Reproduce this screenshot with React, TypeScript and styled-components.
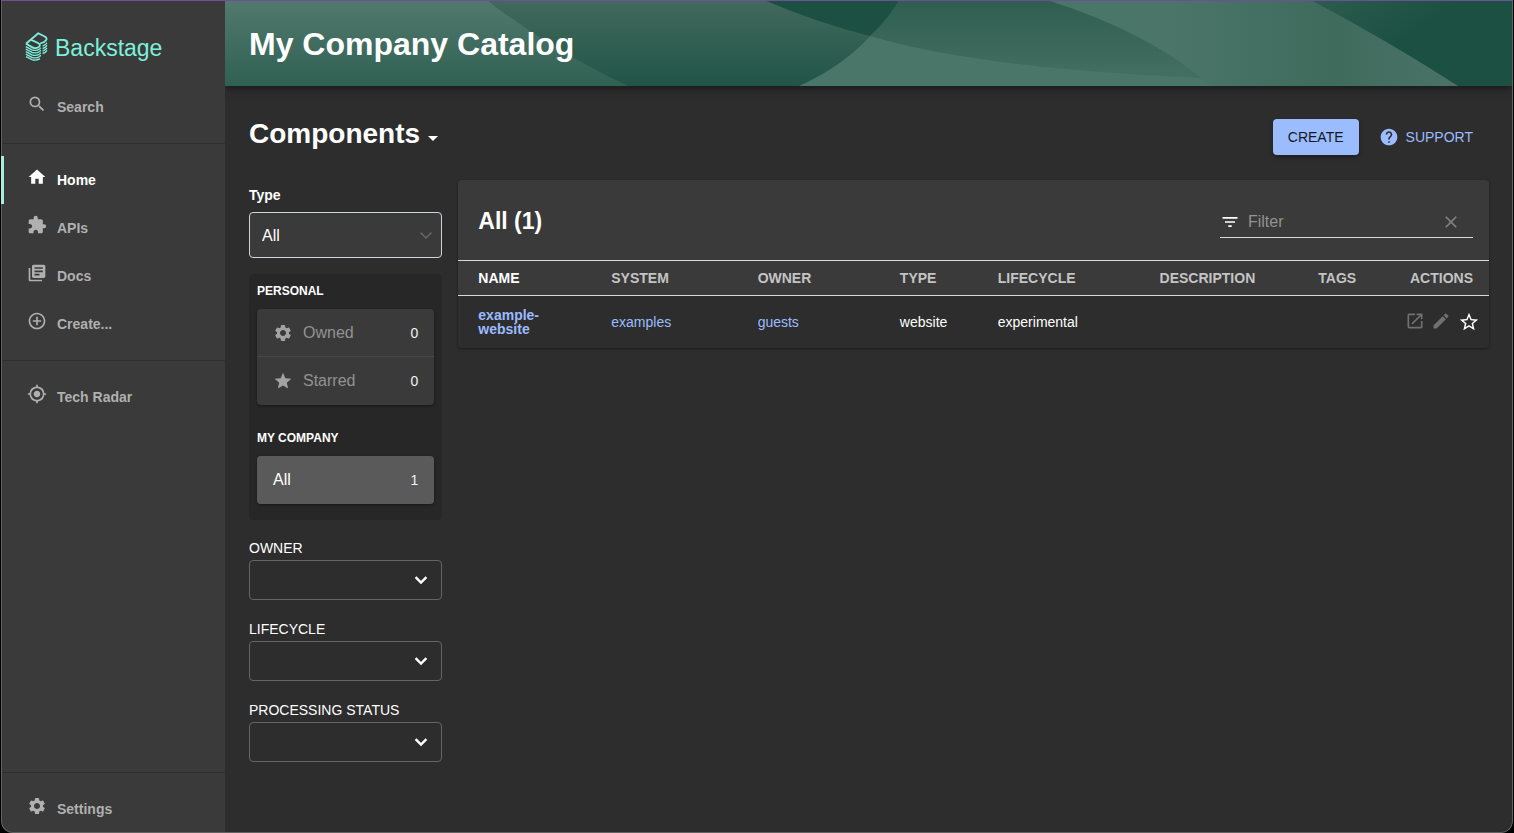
import React from 'react';
import styled, { createGlobalStyle, css } from 'styled-components';
import {
  MdAddCircleOutline,
  MdArrowDropDown,
  MdClear,
  MdEdit,
  MdExtension,
  MdFilterList,
  MdHelp,
  MdHome,
  MdLibraryBooks,
  MdMyLocation,
  MdOpenInNew,
  MdSearch,
  MdSettings,
  MdStar,
  MdStarBorder,
} from 'react-icons/md';

const color = {
  page: '#2d2d2d',
  surface: '#3a3a3a',
  sunken: '#272727',
  selected: '#5a5a5a',
  muted: '#b0b0b0',
  faint: '#929292',
  text: '#ffffff',
  link: '#9bbcff',
  brand: '#7df0da',
  line: '#d8d8d8',
};

const GlobalStyle = createGlobalStyle`
  *, *::before, *::after { box-sizing: border-box; }
  body {
    margin: 0;
    background: #000;
    color: ${color.text};
    font-family: 'Liberation Sans', Arial, sans-serif;
    font-size: 14px;
  }
  button, input, select { font: inherit; color: inherit; }
  h1, h2, h3, ul { margin: 0; padding: 0; }
  ul { list-style: none; }
  svg { display: block; flex: none; }
`;

const Shell = styled.div`
  position: relative;
  display: flex;
  min-height: 100vh;
  margin: 0 1px;
  background: ${color.page};
  border-radius: 0 0 12px 12px;
  overflow: hidden;

  &::after {
    content: '';
    position: absolute;
    inset: 0;
    border: 1px solid #626262;
    border-top-color: #6f4f96;
    border-radius: 0 0 12px 12px;
    pointer-events: none;
  }
`;

const Sidebar = styled.nav`
  display: flex;
  flex-direction: column;
  flex: none;
  width: 224px;
  background: ${color.surface};
`;

const Logo = styled.a`
  display: flex;
  align-items: center;
  gap: 7px;
  height: 83px;
  padding: 13px 24px 0;
  color: ${color.brand};
  font-size: 23px;
  text-decoration: none;

  svg { margin-bottom: 4px; }
`;

const NavItem = styled.a<{ $active?: boolean }>`
  display: flex;
  align-items: center;
  gap: 10px;
  height: 48px;
  padding-left: 26px;
  color: ${color.muted};
  font-weight: 700;
  text-decoration: none;

  svg { margin-bottom: 6px; }

  ${p => p.$active && css`
    position: relative;
    z-index: 1;
    padding-left: 23px;
    border-left: 3px solid #a5ede0;
    color: ${color.text};
  `}
`;

const NavDivider = styled.hr`
  width: 100%;
  height: 1px;
  margin: 12px 0;
  border: 0;
  background: #2f2f2f;
`;

const Spacer = styled.div`
  flex: 1;
`;

const Main = styled.main`
  flex: 1;
  min-width: 0;
  overflow: hidden;
`;

const Banner = styled.header`
  position: relative;
  display: flex;
  align-items: center;
  height: 86px;
  padding: 2px 24px 0;
  background: #1b5042;
  box-shadow: 0 2px 8px rgba(0, 0, 0, 0.5);

  h1 {
    position: relative;
    font-size: 32px;
    line-height: 40px;
  }
`;

const BannerArt = styled.svg`
  position: absolute;
  inset: 0;
  width: 100%;
  height: 100%;
`;

const Content = styled.div`
  padding: 24px;
`;

const ContentHeader = styled.div`
  display: flex;
  align-items: center;
  justify-content: space-between;
  height: 54px;
  margin-bottom: 16px;
`;

const KindButton = styled.button`
  display: flex;
  align-items: flex-end;
  gap: 1px;
  margin-bottom: 6px;
  padding: 0;
  border: 0;
  background: none;
  font-size: 28px;
  font-weight: 700;
  line-height: 32px;
`;

const HeaderActions = styled.div`
  display: flex;
  align-items: center;
  gap: 4px;
`;

const ActionButton = styled.button<{ $filled?: boolean }>`
  display: flex;
  align-items: center;
  gap: 7px;
  height: 36px;
  padding: 0 ${p => (p.$filled ? 15 : 16)}px;
  border: 0;
  border-radius: 4px;
  background: ${p => (p.$filled ? '#9bbcff' : 'transparent')};
  color: ${p => (p.$filled ? '#14181e' : color.link)};
  box-shadow: ${p => (p.$filled ? '0 2px 4px rgba(0, 0, 0, 0.35)' : 'none')};
  text-transform: uppercase;
`;

const Columns = styled.div`
  display: grid;
  grid-template-columns: repeat(12, minmax(0, 1fr));
  gap: 16px;
  align-items: start;
`;

const Filters = styled.aside`
  grid-column: span 2;
`;

const TypeLabel = styled.label`
  display: block;
  margin-bottom: 2px;
  font-weight: 700;
  line-height: 30px;
`;

const SelectBox = styled.div`
  display: grid;
  align-items: center;
  margin-bottom: 16px;

  select, svg { grid-area: 1 / 1; }

  select {
    width: 100%;
    height: 46px;
    padding: 0 12px;
    border: 1px solid #ced4da;
    border-radius: 4px;
    appearance: none;
    background: ${color.surface};
    font-size: 16px;
  }

  svg {
    justify-self: end;
    margin-right: 9px;
    pointer-events: none;
  }
`;

const Picker = styled.section`
  margin-bottom: 18px;
  padding: 0 8px 16px;
  border-radius: 4px;
  background: ${color.sunken};
`;

const PickerTitle = styled.h3`
  font-size: 12px;
  line-height: 35px;
  text-transform: uppercase;
`;

const PickerList = styled.ul`
  border-radius: 4px;
  background: ${color.surface};
  box-shadow: 0 1px 3px rgba(0, 0, 0, 0.4);
  overflow: hidden;

  & + ${PickerTitle} { margin-top: 16px; }
  li:not(:last-child) { box-shadow: inset 0 -1px #484848; }
`;

const PickerRow = styled.button<{ $selected?: boolean }>`
  display: flex;
  align-items: center;
  gap: 10px;
  width: 100%;
  height: 48px;
  padding: 0 16px;
  border: 0;
  background: ${p => (p.$selected ? color.selected : 'transparent')};
  color: ${p => (p.$selected ? color.text : color.faint)};
  font-size: 16px;
  text-align: left;

  svg { color: #a2a2a2; }
`;

const Count = styled.span`
  margin-left: auto;
  color: #f2f2f2;
  font-size: 14px;
`;

const Field = styled.div`
  margin-bottom: 19px;

  label {
    display: block;
    margin-bottom: 2px;
    line-height: 20px;
    text-transform: uppercase;
  }
`;

const ComboBox = styled.div`
  display: flex;
  align-items: center;
  height: 40px;
  padding-right: 8px;
  border: 1px solid #656565;
  border-radius: 4px;

  input {
    flex: 1;
    min-width: 0;
    height: 100%;
    padding: 0 12px;
    border: 0;
    background: none;
    outline: 0;
  }
`;

const IconButton = styled.button<{ $tone?: string }>`
  display: flex;
  padding: 0;
  border: 0;
  background: none;
  color: ${p => p.$tone ?? color.text};
`;

const Card = styled.section`
  grid-column: span 10;
  border-radius: 4px;
  box-shadow: 0 1px 3px rgba(0, 0, 0, 0.4);
  overflow: hidden;
`;

const Toolbar = styled.div`
  display: flex;
  align-items: center;
  justify-content: space-between;
  height: 80px;
  padding: 4px 16px 0 20px;
  background: ${color.surface};

  h2 { font-size: 23px; line-height: 32px; margin-bottom: 2px; }
`;

const FilterBox = styled.div`
  display: flex;
  align-items: center;
  width: 253px;
  height: 32px;
  padding-right: 12px;
  border-bottom: 1px solid ${color.line};

  input {
    flex: 1;
    min-width: 0;
    padding: 0 8px;
    border: 0;
    background: none;
    outline: 0;
    font-size: 16px;
  }
  input::placeholder { color: ${color.faint}; opacity: 1; }
`;

const Table = styled.table`
  width: 100%;
  border-collapse: separate;
  border-spacing: 0;
  table-layout: fixed;

  th {
    height: 36px;
    padding: 0 16px 0 20px;
    border: 1px solid ${color.line};
    border-width: 1px 0;
    background: ${color.surface};
    color: #c4c4c4;
    text-align: left;
    text-transform: uppercase;
  }
  th:first-child { color: ${color.text}; }
  th:last-child { padding-left: 0; text-align: right; }

  td {
    height: 52px;
    padding: 0 16px 0 20px;
    line-height: 14px;
  }
  td:last-child { padding: 0 9px 0 0; }

  a { color: ${color.link}; text-decoration: none; }
`;

const Col = styled.col<{ $share: number }>`
  width: ${p => p.$share}%;
`;

const RowActions = styled.div`
  display: flex;
  align-items: flex-start;
  justify-content: flex-end;
  gap: 6px;

  button:last-child { margin-left: 1px; }
`;

const columns = [
  { name: 'Name', share: 12.9 },
  { name: 'System', share: 14.2 },
  { name: 'Owner', share: 13.8 },
  { name: 'Type', share: 9.5 },
  { name: 'Lifecycle', share: 15.7 },
  { name: 'Description', share: 15.4 },
  { name: 'Tags', share: 8.5 },
  { name: 'Actions', share: 10 },
];

const LogoMark = () => (
  <svg width="23" height="29" viewBox="0 0 23 29" fill="none" stroke="currentColor" strokeWidth="1.3" strokeLinejoin="round" aria-hidden="true">
    <path strokeWidth="1.8" d="M1 11.8 L13.3 1.2 L20.2 4.8 Q22.6 6.4 20.8 8.6 Q18.4 11.2 15.2 11.4 M5.8 7.6 L13 11 Q16.4 13 13.8 15 Q10.6 17.2 7.4 15.4 L1 11.8" />
    <path d="M.8 14.6 L7 17.8 Q11 19.4 14.6 17 L15.8 15.8 M17.6 14 Q20.6 13.2 22 10.8" />
    <path d="M.8 17.1 L7 20.3 Q11 21.9 14.6 19.5 L15.8 18.3 M17.6 16.5 Q20.6 15.7 22 13.3" />
    <path d="M.8 19.6 L7 22.8 Q11 24.4 14.6 22 L15.8 20.8 M17.6 19 Q20.6 18.2 22 15.8" />
    <path d="M.8 22.1 L7 25.3 Q11 26.9 14.6 24.5 L15.8 23.3 M17.6 21.5 Q20.6 20.7 22 18.3" />
    <path d="M1 24.6 L7 27.6 Q11 29 15 26.6" />
  </svg>
);

const Waves = () => (
  <BannerArt viewBox="0 0 1288 86" preserveAspectRatio="none" aria-hidden="true">
    <defs>
      <linearGradient id="left" x1="0" y1="0" x2="0" y2="1">
        <stop offset="0" stopColor="#52796e" />
        <stop offset="1" stopColor="#2f6152" />
      </linearGradient>
      <linearGradient id="middle" x1="0" y1="0" x2="0" y2="1">
        <stop offset="0" stopColor="#42695d" />
        <stop offset="1" stopColor="#215548" />
      </linearGradient>
      <linearGradient id="lens" x1="0" y1="0" x2="0" y2="1">
        <stop offset="0" stopColor="#2f5e51" />
        <stop offset="1" stopColor="#467064" />
      </linearGradient>
      <linearGradient id="right" x1="0" y1="0" x2="1" y2="0">
        <stop offset="0" stopColor="#4a7569" />
        <stop offset="0.3" stopColor="#4a7568" />
        <stop offset="0.7" stopColor="#3f6b5d" />
        <stop offset="1" stopColor="#4a7366" />
      </linearGradient>
      <linearGradient id="corner" gradientUnits="userSpaceOnUse" x1="1110" y1="0" x2="1150" y2="60">
        <stop offset="0" stopColor="#2a5b4d" />
        <stop offset="1" stopColor="#1b5042" />
      </linearGradient>
    </defs>
    <path d="M1086 0 H1288 V86 H1233 Z" fill="url(#corner)" />
    <path d="M262 0 H539 Q590 22 645 36 Q618 66 574 86 H403 Q330 52 262 0 Z" fill="url(#middle)" />
    <path d="M0 0 H262 Q330 52 403 86 H0 Z" fill="url(#left)" />
    <path d="M674 0 H1000 V86 H645 V36 Q664 18 674 0 Z" fill="url(#lens)" />
    <path d="M645 36 C760 70 940 80 1233 86 H574 Q618 66 645 36 Z" fill="#4a7569" />
    <path d="M822 0 H1086 Q1165 42 1233 86 H986 Q926 33 822 0 Z" fill="url(#right)" />
  </BannerArt>
);

const ComboField = ({ id, label }: { id: string; label: string }) => (
  <Field>
    <label htmlFor={id}>{label}</label>
    <ComboBox>
      <input id={id} type="text" />
      <IconButton type="button" aria-label={`Open ${label}`}>
        <svg width="24" height="24" viewBox="0 0 24 24" fill="none" stroke="currentColor" strokeWidth="2.4" aria-hidden="true">
          <path d="M6.6 9.2 L12 14.6 L17.4 9.2" />
        </svg>
      </IconButton>
    </ComboBox>
  </Field>
);

export default function App() {
  return (
    <>
      <GlobalStyle />
      <Shell>
        <Sidebar>
          <Logo href="#">
            <LogoMark />
            Backstage
          </Logo>
          <NavItem href="#search"><MdSearch size={20} />Search</NavItem>
          <NavDivider />
          <NavItem href="#home" $active><MdHome size={20} />Home</NavItem>
          <NavItem href="#apis"><MdExtension size={20} />APIs</NavItem>
          <NavItem href="#docs"><MdLibraryBooks size={20} />Docs</NavItem>
          <NavItem href="#create"><MdAddCircleOutline size={20} />Create...</NavItem>
          <NavDivider />
          <NavItem href="#radar"><MdMyLocation size={20} />Tech Radar</NavItem>
          <Spacer />
          <NavDivider />
          <NavItem href="#settings"><MdSettings size={20} />Settings</NavItem>
        </Sidebar>

        <Main>
          <Banner>
            <Waves />
            <h1>My Company Catalog</h1>
          </Banner>
          <Content>
            <ContentHeader>
              <KindButton type="button">
                Components
                <MdArrowDropDown size={24} />
              </KindButton>
              <HeaderActions>
                <ActionButton type="button" $filled>Create</ActionButton>
                <ActionButton type="button"><MdHelp size={20} />Support</ActionButton>
              </HeaderActions>
            </ContentHeader>

            <Columns>
              <Filters>
                <TypeLabel htmlFor="type">Type</TypeLabel>
                <SelectBox>
                  <select id="type" defaultValue="all">
                    <option value="all">All</option>
                  </select>
                  <svg width="14" height="9" viewBox="0 0 14 9" fill="none" stroke="#686868" strokeWidth="1.5" aria-hidden="true">
                    <path d="M1.5 1.5 L7 7 L12.5 1.5" />
                  </svg>
                </SelectBox>

                <Picker>
                  <PickerTitle>Personal</PickerTitle>
                  <PickerList>
                    <li><PickerRow type="button"><MdSettings size={20} />Owned<Count>0</Count></PickerRow></li>
                    <li><PickerRow type="button"><MdStar size={20} />Starred<Count>0</Count></PickerRow></li>
                  </PickerList>
                  <PickerTitle>My Company</PickerTitle>
                  <PickerList>
                    <li><PickerRow type="button" $selected>All<Count>1</Count></PickerRow></li>
                  </PickerList>
                </Picker>

                <ComboField id="owner" label="Owner" />
                <ComboField id="lifecycle" label="Lifecycle" />
                <ComboField id="status" label="Processing Status" />
              </Filters>

              <Card>
                <Toolbar>
                  <h2>All (1)</h2>
                  <FilterBox>
                    <MdFilterList size={20} />
                    <input type="text" placeholder="Filter" aria-label="Filter" />
                    <IconButton type="button" aria-label="Clear filter" $tone="#808080">
                      <MdClear size={20} />
                    </IconButton>
                  </FilterBox>
                </Toolbar>
                <Table>
                  <colgroup>
                    {columns.map(c => <Col key={c.name} $share={c.share} />)}
                  </colgroup>
                  <thead>
                    <tr>{columns.map(c => <th key={c.name} scope="col">{c.name}</th>)}</tr>
                  </thead>
                  <tbody>
                    <tr>
                      <td><a href="#example-website"><strong>example-website</strong></a></td>
                      <td><a href="#examples">examples</a></td>
                      <td><a href="#guests">guests</a></td>
                      <td>website</td>
                      <td>experimental</td>
                      <td />
                      <td />
                      <td>
                        <RowActions>
                          <IconButton type="button" aria-label="View" $tone="#717171"><MdOpenInNew size={20} /></IconButton>
                          <IconButton type="button" aria-label="Edit" $tone="#717171"><MdEdit size={20} /></IconButton>
                          <IconButton type="button" aria-label="Add to favorites"><MdStarBorder size={22} /></IconButton>
                        </RowActions>
                      </td>
                    </tr>
                  </tbody>
                </Table>
              </Card>
            </Columns>
          </Content>
        </Main>
      </Shell>
    </>
  );
}
